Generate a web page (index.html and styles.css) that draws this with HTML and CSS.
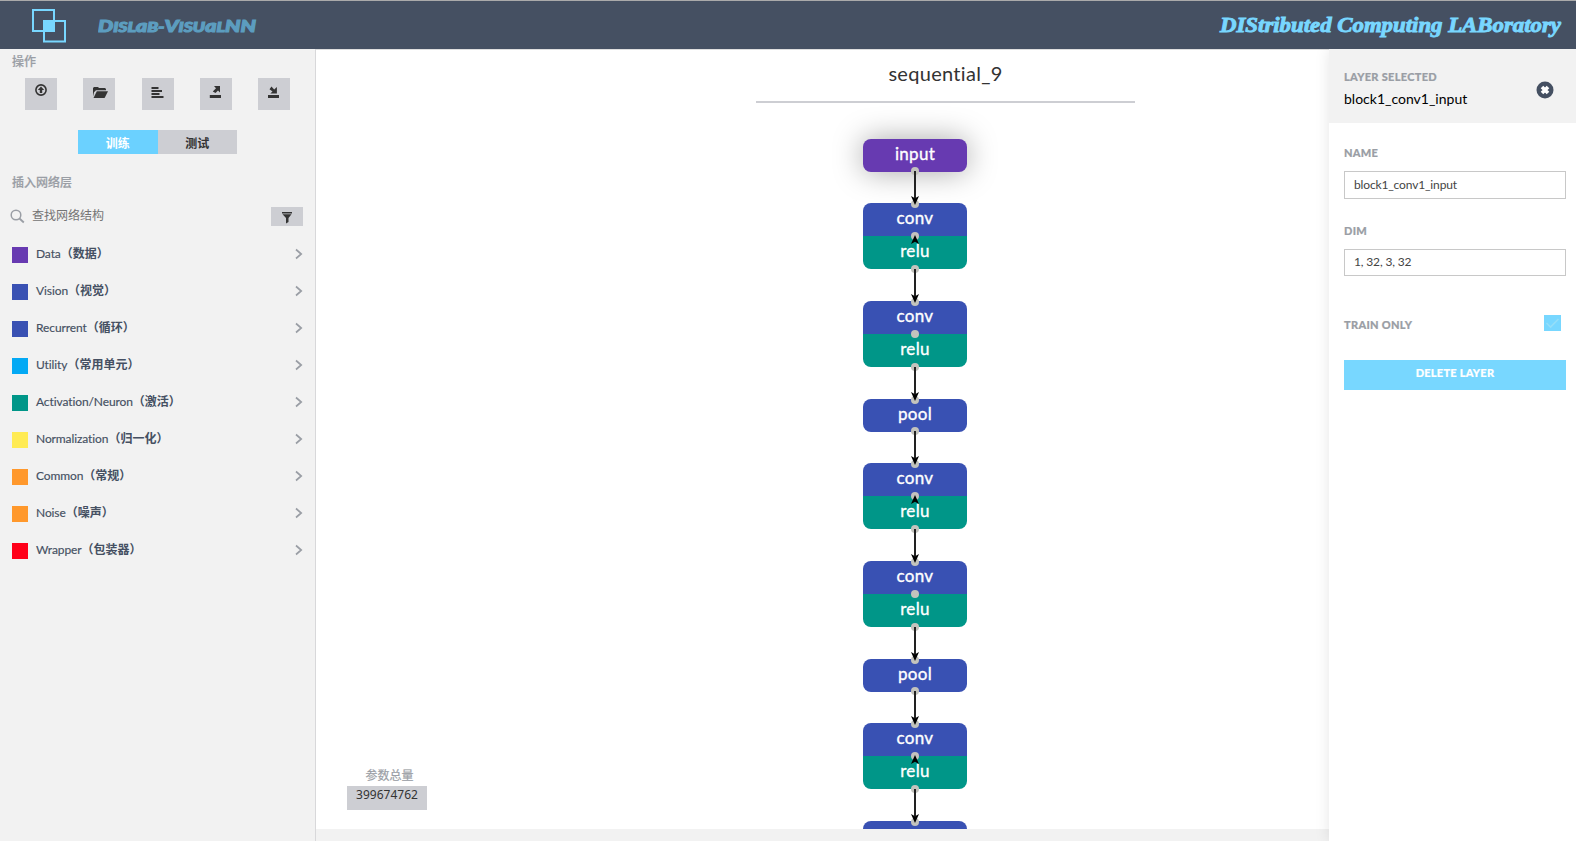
FILE: index.html
```html
<!DOCTYPE html>
<html lang="zh-CN">
<head>
<meta charset="utf-8">
<title>Dislab-VisualNN</title>
<link rel="stylesheet" href="styles.css">
</head>
<body>
<header class="topbar">
  <svg class="logo" width="34" height="34" viewBox="0 0 34 34"><path d="M1 1h21v21H1zM12 12h21v20.500H12z" fill="none" stroke="#78d7ff" stroke-width="2"/><path d="M11 11h12v12H11z" fill="#78d7ff"/></svg>
  <svg class="brand" width="162" height="24"><text x="0" y="18" textLength="158" lengthAdjust="spacingAndGlyphs"><tspan class="cap">D</tspan>ISL<tspan class="round">a</tspan>B-<tspan class="cap">V</tspan>ISU<tspan class="round">a</tspan>L<tspan class="cap">NN</tspan></text></svg>
  <svg class="lab" width="350" height="30"><text x="5" y="21" textLength="341" lengthAdjust="spacingAndGlyphs">DIStributed Computing LABoratory</text></svg>
</header>
<div class="main">
  <aside class="sidebar">
    <h5 class="caption">操作</h5>
    <div class="actions">
      <button class="act"><svg width="32" height="32"><circle cx="16" cy="12" r="5.100" fill="none" stroke="#333" stroke-width="1.600"/><path d="M16 8.500l3.200 3.400h-2V15h-2.400v-3.100h-2z" fill="#333"/></svg></button>
      <button class="act"><svg width="32" height="32"><path d="M10 18.500V10l1-1h4l1 1h6l1 1v1.200H13l-2 2z" fill="#333"/><path d="M13.800 13.200H25L21.600 20H10.500z" fill="#333"/></svg></button>
      <button class="act"><svg width="32" height="32"><path d="M9.500 9h7v2h-7zM9.500 12h10.500v2H9.500zM9.500 15h8v2h-8zM9.500 18h12v2h-12z" fill="#333"/></svg></button>
      <button class="act"><svg width="32" height="32"><path d="M9.800 17h11.200v3H9.800zM14 8h6v6.500l-2-2-2.500 2.500-2.700-1.500L16 10.300z" fill="#333"/></svg></button>
      <button class="act"><svg width="32" height="32"><path d="M10 17h11v3H10zM18.900 9v6.500h-6.600l2.200-2-3-2.200L13.500 8.500l2.700 3z" fill="#333"/></svg></button>
    </div>
    <div class="modes"><button class="mode on">训练</button><button class="mode">测试</button></div>
    <h5 class="caption insert">插入网络层</h5>
    <div class="search">
      <svg width="16" height="16"><circle cx="6" cy="6" r="4.800" fill="none" stroke="#9a9ea5" stroke-width="1.500"/><path d="M9.500 9.500l4.300 4" stroke="#9a9ea5" stroke-width="1.800"/></svg>
      <span class="hint">查找网络结构</span>
      <button class="filter"><svg width="32" height="19"><path d="M11 5h10v1.500H11zM11.500 7.200h9l-3 3.800v4L15 16.500V11z" fill="#333"/></svg></button>
    </div>
    <ul class="layers">
      <li><i class="purple"></i><span>Data<b>（数据）</b></span><svg class="chev" width="8" height="12"><path d="M1 1.500L6.200 6 1 10.500"/></svg></li>
      <li><i class="blue"></i><span>Vision<b>（视觉）</b></span><svg class="chev" width="8" height="12"><path d="M1 1.500L6.200 6 1 10.500"/></svg></li>
      <li><i class="blue"></i><span>Recurrent<b>（循环）</b></span><svg class="chev" width="8" height="12"><path d="M1 1.500L6.200 6 1 10.500"/></svg></li>
      <li><i class="sky"></i><span>Utility<b>（常用单元）</b></span><svg class="chev" width="8" height="12"><path d="M1 1.500L6.200 6 1 10.500"/></svg></li>
      <li><i class="teal"></i><span>Activation/Neuron<b>（激活）</b></span><svg class="chev" width="8" height="12"><path d="M1 1.500L6.200 6 1 10.500"/></svg></li>
      <li><i class="yellow"></i><span>Normalization<b>（归一化）</b></span><svg class="chev" width="8" height="12"><path d="M1 1.500L6.200 6 1 10.500"/></svg></li>
      <li><i class="orange"></i><span>Common<b>（常规）</b></span><svg class="chev" width="8" height="12"><path d="M1 1.500L6.200 6 1 10.500"/></svg></li>
      <li><i class="orange"></i><span>Noise<b>（噪声）</b></span><svg class="chev" width="8" height="12"><path d="M1 1.500L6.200 6 1 10.500"/></svg></li>
      <li><i class="red"></i><span>Wrapper<b>（包装器）</b></span><svg class="chev" width="8" height="12"><path d="M1 1.500L6.200 6 1 10.500"/></svg></li>
    </ul>
  </aside>

  <section class="canvas">
    <div class="net-name">sequential_9</div>
    <div class="node purple single picked" style="top:89px">input</div>
    <div class="node blue head" style="top:153px">conv</div>
    <div class="node teal tail" style="top:186px">relu</div>
    <div class="node blue head" style="top:251px">conv</div>
    <div class="node teal tail" style="top:284px">relu</div>
    <div class="node blue single" style="top:349px">pool</div>
    <div class="node blue head" style="top:413px">conv</div>
    <div class="node teal tail" style="top:446px">relu</div>
    <div class="node blue head" style="top:511px">conv</div>
    <div class="node teal tail" style="top:544px">relu</div>
    <div class="node blue single" style="top:609px">pool</div>
    <div class="node blue head" style="top:673px">conv</div>
    <div class="node teal tail" style="top:706px">relu</div>
    <div class="node blue head" style="top:771px"></div>
    <svg class="wires" width="30" height="778">
      <defs>
        <circle id="dot" r="4" fill="#c3c3bd"/>
        <g id="wire"><use href="#dot"/><use href="#dot" y="33"/><path d="M0 0v27" stroke="#222" stroke-width="2"/><path d="M0 34l-4-9 4 2.300 4-2.300z"/></g>
        <g id="loop"><use href="#dot"/><path d="M0-1l-4 9 4-2.300 4 2.300z"/></g>
      </defs>
      <use href="#wire" x="15" y="121"/>
      <use href="#loop" x="15" y="186"/>
      <use href="#wire" x="15" y="219"/>
      <use href="#dot" x="15" y="284"/>
      <use href="#wire" x="15" y="317"/>
      <use href="#wire" x="15" y="381"/>
      <use href="#loop" x="15" y="446"/>
      <use href="#wire" x="15" y="479"/>
      <use href="#dot" x="15" y="544"/>
      <use href="#wire" x="15" y="577"/>
      <use href="#wire" x="15" y="641"/>
      <use href="#loop" x="15" y="706"/>
      <use href="#wire" x="15" y="739"/>
    </svg>
    <div class="params"><div class="params-title">参数总量</div><div class="params-value">399674762</div></div>
  </section>

  <aside class="props">
    <div class="props-head">
      <div><div class="label">LAYER SELECTED</div><div class="selected">block1_conv1_input</div></div>
      <svg class="close" width="18" height="18"><circle cx="9" cy="9" r="8.500" fill="#455062"/><path d="M6 6l6 6M12 6l-6 6" stroke="#fff" stroke-width="3.600"/></svg>
    </div>
    <div class="props-body">
      <div class="label">NAME</div>
      <div class="field name">block1_conv1_input</div>
      <div class="label">DIM</div>
      <div class="field dim">1, 32, 3, 32</div>
      <div class="train"><span class="label">TRAIN ONLY</span><svg width="17" height="16"><path d="M0 0h17v16H0z" fill="#78d7ff"/><path d="M2.500 8l4 4 8-8" fill="none" stroke="#94def9" stroke-width="1.700"/></svg></div>
      <button class="delete">DELETE LAYER</button>
    </div>
  </aside>
</div>
</body>
</html>
```

FILE: styles.css
```css
* { box-sizing: border-box; }
body { margin: 0; width: 1576px; height: 841px; overflow: hidden; background: #f2f2f2; font-family: Lato, "Noto Sans CJK SC", sans-serif; color: #333; }
button { border: 0; padding: 0; font-family: inherit; }
svg { display: block; flex: none; }

.topbar { height: 49px; background: #455062; border-top: 1px solid #aaa; display: flex; align-items: flex-start; padding: 8px 11px 0 32px; }
.brand { margin: 5px 0 0 32px; }
.brand text { font: italic 900 14px Lato, sans-serif; fill: #5c9dbf; stroke: #5c9dbf; stroke-width: 1.1px; }
.brand .cap { font-size: 17px; }
.brand .round { font-size: 17px; }
.lab { margin: 2px 0 0 auto; overflow: visible; }
.lab text { font: italic 700 20px "Liberation Serif", serif; fill: #78d7ff; stroke: #78d7ff; stroke-width: .9px; }

.main { display: flex; height: 792px; }
.sidebar { width: 316px; border-right: 1px solid #d8d8da; padding: 4px 12px 0; }
.caption { margin: 0; font-size: 12px; line-height: 18px; font-weight: 500; color: #9a9ea5; -webkit-text-stroke: .2px #9a9ea5; }
.actions { display: flex; justify-content: space-between; padding: 7px 13px 0; }
.act { width: 32px; height: 32px; background: #cdced3; }
.modes { display: flex; width: 159px; margin: 20px 0 0 66px; }
.mode { flex: 1; height: 24px; font-size: 12px; font-weight: 700; background: #cdced3; color: #333; }
.mode.on { background: #6bd1ff; color: #fff; }
.insert { margin-top: 20px; }
.search { display: flex; margin: 14px 0 0 -2px; height: 24px; align-items: flex-start; }
.search > svg { margin-top: 3px; }
.hint { margin-left: 6px; font-size: 12px; line-height: 20px; color: #747474; }
.filter { width: 32px; height: 19px; margin: 1px 0 0 auto; background: #cdced3; }

.layers { list-style: none; margin: 5px 0 0; padding: 0; }
.layers li { height: 37px; display: flex; align-items: center; color: #455062; font-size: 12px; letter-spacing: -.1px; }
.layers i { width: 16px; height: 16px; margin: 2px 8px 0 0; }
.layers span { line-height: 18px; -webkit-text-stroke: .15px #455062; }
.layers b { font-weight: 700; letter-spacing: 0; -webkit-text-stroke: 0; }
.chev { margin: 1px 0 0 auto; fill: none; stroke: #9a9ea5; stroke-width: 1.7px; }
.purple { background: #673ab1; }
.blue { background: #3951b3; }
.sky { background: #03a9f4; }
.teal { background: #009688; }
.yellow { background: #ffeb54; }
.orange { background: #ff982c; }
.red { background: #ff0019; }

.canvas { width: 1013px; height: 780px; background: #fff; position: relative; overflow: hidden; border-top: 1px solid #dedede; }
.net-name { width: 379px; height: 53px; margin-left: 440px; border-bottom: 2px solid #cdced3; text-align: center; font-size: 20px; line-height: 47px; letter-spacing: .3px; }
.node { position: absolute; left: 547px; width: 104px; height: 33px; color: #fff; text-align: center; font-size: 17px; line-height: 29px; letter-spacing: .3px; -webkit-text-stroke: .35px #fff; }
.single { border-radius: 8px; }
.head { border-radius: 8px 8px 0 0; }
.tail { border-radius: 0 0 8px 8px; }
.picked { box-shadow: 0 0 30px rgba(0,0,0,.35); }
.wires { position: absolute; left: 584px; top: 0; }
.params { position: absolute; left: 31px; top: 716px; width: 80px; text-align: center; font-size: 12px; }
.params-title { line-height: 20px; color: #9a9ea5; padding-left: 5px; -webkit-text-stroke: .2px #9a9ea5; }
.params-value { height: 24px; line-height: 18px; background: #cdced3; font-family: "Noto Sans", sans-serif; font-size: 12px; }

.props { width: 247px; background: #fff; box-shadow: 0 0 14px rgba(0,0,0,.1); clip-path: inset(0 0 0 -16px); position: relative; }
.props-head { height: 74px; background: #f2f2f2; display: flex; justify-content: space-between; padding: 19px 22px 0 15px; }
.label { font-size: 11px; line-height: 18px; font-weight: 900; color: #9a9ea5; letter-spacing: .3px; -webkit-text-stroke: .2px #9a9ea5; }
.selected { font-size: 14px; line-height: 26px; color: #000; letter-spacing: 0; }
.close { margin-top: 13px; }
.props-body { padding: 21px 10px 0 15px; }
.field { border: 1px solid #c8c8c8; padding: 0 9px; font-size: 12px; line-height: 25px; color: #444; letter-spacing: -.15px; }
.name { height: 28px; margin: 9px 0 23px; }
.dim { height: 27px; line-height: 23px; margin: 9px 0 39px; }
.train { display: flex; justify-content: space-between; padding-right: 5px; }
.train .label { line-height: 20px; height: 18px; }
.delete { display: block; width: 100%; height: 30px; margin-top: 27px; padding-bottom: 5px; background: #78d7ff; color: #fff; font-weight: 900; font-size: 11px; letter-spacing: .25px; -webkit-text-stroke: .2px #fff; }
```
